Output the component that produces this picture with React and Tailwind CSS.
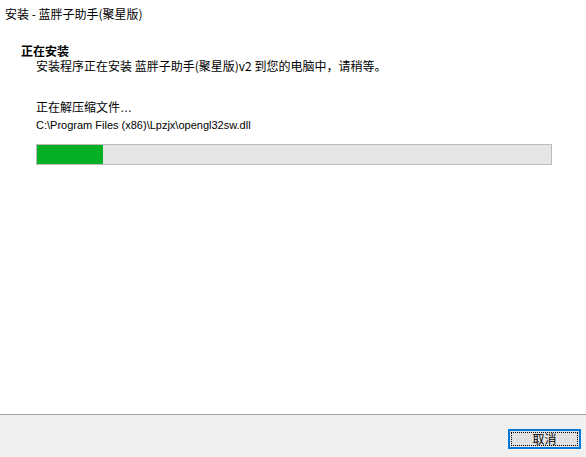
import React from "react";

const cjk = { fontFamily: '"Noto Sans CJK SC", "Liberation Sans", sans-serif' };

export default function App() {
  const percent = 12.8;
  return (
    <div
      className="w-[586px] h-[457px] bg-white flex flex-col text-black overflow-hidden"
      style={cjk}
    >
      {/* Title */}
      <div className="h-[28px] pl-[5px] pt-[6px] text-[12px] leading-[16px]">
        安装 - 蓝胖子助手(聚星版)
      </div>

      {/* Body */}
      <div className="flex-1 flex flex-col">
        <div className="pl-[21px] pt-[15px] text-[12px] leading-[15px] font-bold">
          正在安装
        </div>
        <div className="pl-[36px] text-[12px] leading-[16px]">
          安装程序正在安装 蓝胖子助手(聚星版)v2 到您的电脑中，请稍等。
        </div>

        <div className="pl-[36px] pt-[25px] text-[12px] leading-[16px]">
          正在解压缩文件
          <span style={{ fontFamily: '"Liberation Sans", sans-serif' }}>…</span>
        </div>
        <div
          className="pl-[36px] pt-[2px] text-[11px] leading-[14px] text-[#000]"
          style={{ fontFamily: '"Liberation Sans", sans-serif' }}
        >
          C:\Program Files (x86)\Lpzjx\opengl32sw.dll
        </div>

        <div className="pl-[36px] pt-[12px]">
          <div className="w-[516px] h-[21px] border border-[#bcbcbc] bg-[#e6e6e6]">
            <div className="h-full bg-[#06b025]" style={{ width: `${percent}%` }} />
          </div>
        </div>
      </div>

      {/* Footer */}
      <div className="h-[43px] border-t border-[#a0a0a0] bg-[#f0f0f0] flex justify-end items-start pt-[14px] pr-[5px]">
        <button className="w-[73px] h-[20px] border-2 border-[#0078d7] bg-[#e1e1e1] p-[1px]">
          <div className="w-full h-full border border-dotted border-black flex items-center justify-center text-[12px] leading-[12px]">
            取消
          </div>
        </button>
      </div>
    </div>
  );
}
